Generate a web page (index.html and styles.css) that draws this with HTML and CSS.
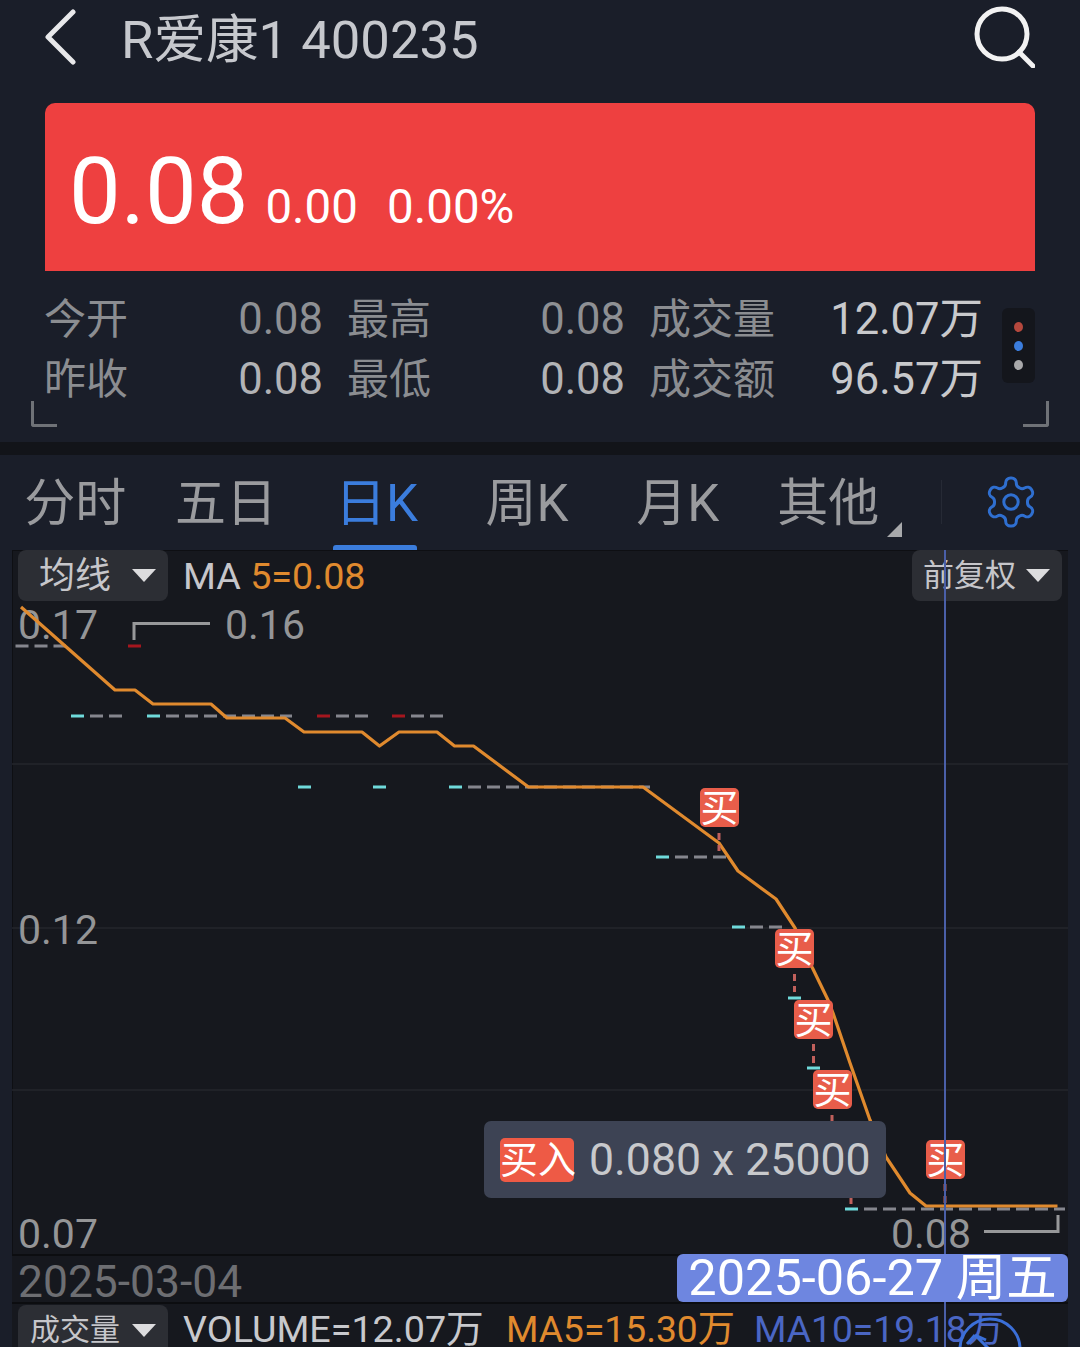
FILE: index.html
```html
<!DOCTYPE html>
<html lang="zh-CN">
<head>
  <meta charset="UTF-8">
  <meta name="viewport" content="width=device-width, initial-scale=1.0">
  <title>R爱康1 400235</title>
  <link rel="stylesheet" href="styles.css">
</head>
<body>
  <header class="topbar">
    <svg class="back-icon" viewBox="0 0 32 56"><path d="M28 3 L3 28 L28 53"/></svg>
    <h1 class="stock-name">R爱康1 400235</h1>
    <svg class="search-icon" viewBox="0 0 62 62"><circle cx="29" cy="28" r="25"/><path d="M46 46 L60 60"/></svg>
  </header>

  <section class="quote-card">
    <span class="price">0.08</span>
    <span class="change">0.00</span>
    <span class="change">0.00%</span>
  </section>

  <section class="stats">
    <div class="stats-grid">
      <div class="stat"><span>今开</span><b>0.08</b></div>
      <div class="stat"><span>最高</span><b>0.08</b></div>
      <div class="stat"><span>成交量</span><b class="bright">12.07万</b></div>
      <div class="stat"><span>昨收</span><b class="mid">0.08</b></div>
      <div class="stat"><span>最低</span><b class="mid">0.08</b></div>
      <div class="stat"><span>成交额</span><b class="bright">96.57万</b></div>
    </div>
    <div class="dots"><i class="dot-red"></i><i class="dot-blue"></i><i class="dot-gray"></i></div>
    <i class="corner corner-left"></i>
    <i class="corner corner-right"></i>
  </section>

  <div class="band"></div>

  <nav class="tabs">
    <a class="tab">分时</a>
    <a class="tab">五日</a>
    <a class="tab active">日K</a>
    <a class="tab">周K</a>
    <a class="tab">月K</a>
    <a class="tab more">其他</a>
    <i class="tab-sep"></i>
    <svg class="gear" viewBox="2 2 20 20">
      <path d="M12.22 2h-.44a2 2 0 0 0-2 2v.18a2 2 0 0 1-1 1.73l-.43.25a2 2 0 0 1-2 0l-.15-.08a2 2 0 0 0-2.73.73l-.22.38a2 2 0 0 0 .73 2.73l.15.1a2 2 0 0 1 1 1.72v.51a2 2 0 0 1-1 1.74l-.15.09a2 2 0 0 0-.73 2.73l.22.38a2 2 0 0 0 2.73.73l.15-.08a2 2 0 0 1 2 0l.43.25a2 2 0 0 1 1 1.73V20a2 2 0 0 0 2 2h.44a2 2 0 0 0 2-2v-.18a2 2 0 0 1 1-1.73l.43-.25a2 2 0 0 1 2 0l.15.08a2 2 0 0 0 2.73-.73l.22-.39a2 2 0 0 0-.73-2.73l-.15-.08a2 2 0 0 1-1-1.74v-.5a2 2 0 0 1 1-1.74l.15-.09a2 2 0 0 0 .73-2.73l-.22-.38a2 2 0 0 0-2.73-.73l-.15.08a2 2 0 0 1-2 0l-.43-.25a2 2 0 0 1-1-1.73V4a2 2 0 0 0-2-2z"/>
      <circle cx="12" cy="12" r="3"/>
    </svg>
  </nav>

  <main class="chart-wrap">
    <div class="chart">
      <!-- viewBox uses page coordinates so points can be read off the screen -->
      <svg class="plot" viewBox="12 550 1056 704">
        <defs>
          <g id="buy">
            <rect width="39" height="39" rx="5" class="buy-bg"/>
            <text x="19.5" y="33" class="buy-text">买</text>
          </g>
        </defs>

        <line class="grid" x1="12" y1="764" x2="1068" y2="764"/>
        <line class="grid" x1="12" y1="928" x2="1068" y2="928"/>
        <line class="grid" x1="12" y1="1090" x2="1068" y2="1090"/>

        <text class="axis" x="18" y="639">0.17</text>
        <text class="axis" x="225" y="639">0.16</text>
        <text class="axis" x="18" y="944">0.12</text>
        <text class="axis" x="18" y="1248">0.07</text>
        <text class="axis" x="891" y="1248">0.08</text>
        <path class="leader" d="M134 640 V623.5 H210"/>
        <path class="leader" d="M984 1231.5 H1058 V1215"/>

        <line class="dash" x1="15.5" y1="646" x2="66" y2="646"/>
        <line class="dash" x1="90" y1="716" x2="122" y2="716"/>
        <line class="dash" x1="166" y1="716" x2="292" y2="716"/>
        <line class="dash" x1="336" y1="716" x2="368" y2="716"/>
        <line class="dash" x1="411" y1="716" x2="443" y2="716"/>
        <line class="dash" x1="468" y1="787" x2="650" y2="787"/>
        <line class="dash" x1="675" y1="857" x2="728" y2="857"/>
        <line class="dash" x1="750" y1="927" x2="782" y2="927"/>
        <line class="dash" x1="864" y1="1209" x2="1065" y2="1209"/>

        <line class="tick-red" x1="128" y1="646" x2="141" y2="646"/>
        <line class="tick-red" x1="317" y1="716" x2="330" y2="716"/>
        <line class="tick-red" x1="392" y1="716" x2="405" y2="716"/>
        <line class="tick-cyan" x1="71" y1="716" x2="84" y2="716"/>
        <line class="tick-cyan" x1="147" y1="716" x2="160" y2="716"/>
        <line class="tick-cyan" x1="298" y1="787" x2="311" y2="787"/>
        <line class="tick-cyan" x1="373" y1="787" x2="386" y2="787"/>
        <line class="tick-cyan" x1="449" y1="787" x2="462" y2="787"/>
        <line class="tick-cyan" x1="656" y1="857" x2="669" y2="857"/>
        <line class="tick-cyan" x1="732" y1="927" x2="745" y2="927"/>
        <line class="tick-cyan" x1="788" y1="998" x2="801" y2="998"/>
        <line class="tick-cyan" x1="807" y1="1068" x2="820" y2="1068"/>
        <line class="tick-cyan" x1="845" y1="1209" x2="858" y2="1209"/>

        <polyline class="ma5" points="21,607 115,690 135,690 153,704 211,704 227,718 285,718 304,732 362,732 379.5,746 399,732 437,732 454.5,746 473.5,746 528.5,787 643,787 719,843 738,871 776,899 795,928 812,967 828,1000 833,1013 850,1063 870,1120 886,1157 910,1193 926,1206 1057.5,1206"/>

        <line class="buy-stem" x1="719" y1="833" x2="719" y2="851"/>
        <line class="buy-stem" x1="794.5" y1="974" x2="794.5" y2="992"/>
        <line class="buy-stem" x1="813.5" y1="1044" x2="813.5" y2="1063"/>
        <line class="buy-stem" x1="832" y1="1115" x2="832" y2="1124"/>
        <line class="buy-stem" x1="851" y1="1197" x2="851" y2="1204"/>
        <line class="buy-stem" x1="945" y1="1184" x2="945" y2="1208"/>

        <use href="#buy" x="700" y="788"/>
        <use href="#buy" x="775" y="929"/>
        <use href="#buy" x="794" y="1000"/>
        <use href="#buy" x="813" y="1070"/>
        <use href="#buy" x="926" y="1140"/>
      </svg>

      <div class="chart-head">
        <div class="pill">均线<i class="caret"></i></div>
        <div class="ma-label">MA <span class="c-orange">5=0.08</span></div>
        <div class="pill pill-right">前复权<i class="caret"></i></div>
      </div>

      <div class="trade-tip">
        <span class="trade-tag">买入</span>
        <span class="trade-text">0.080 x 25000</span>
      </div>
    </div>

    <div class="date-strip">
      <span class="date-start">2025-03-04</span>
      <span class="date-current">2025-06-27 周五</span>
    </div>

    <div class="volume-row">
      <div class="pill pill-volume">成交量<i class="caret"></i></div>
      <span class="vol vol-main">VOLUME=12.07万</span>
      <span class="vol vol-ma5 c-orange">MA5=15.30万</span>
      <span class="vol vol-ma10 c-blue">MA10=19.18万</span>
    </div>

    <i class="cursor"></i>
    <svg class="float-btn" viewBox="0 0 64 64"><circle cx="32" cy="32" r="30"/><path d="M17 18 L9 27 M17 18 L28 23 M17 18 L31 32"/></svg>
  </main>
</body>
</html>
```

FILE: styles.css
```css
:root {
  --page-bg: #1a1e29;
  --chart-bg: #16181e;
  --label: #8b8d91;
  --text: #c8c9cd;
  --blue: #3b7ddd;
  --orange: #e08a2e;
  --buy: #e85d4a;
}
* {
  box-sizing: border-box;
}
html, body {
  height: 1347px;
}
body {
  margin: 0;
  background: var(--page-bg);
  color: var(--text);
  font-family: "Roboto", "Noto Sans CJK SC", sans-serif;
  font-weight: 400;
  overflow: hidden;
}
i {
  display: block;
}

/* top bar */
.topbar {
  height: 103px;
  padding: 0 45px;
  display: flex;
  align-items: flex-start;
}
.back-icon {
  width: 32px;
  height: 56px;
  margin-top: 9px;
  fill: none;
  stroke: #e8e8ea;
  stroke-width: 5;
  stroke-linecap: round;
  stroke-linejoin: round;
}
.stock-name {
  margin: 7px 0 0 44px;
  font-size: 52.6px;
  line-height: 66px;
  font-weight: 400;
  color: #c6c8cd;
}
.search-icon {
  width: 62px;
  height: 62px;
  margin: 6px 0 0 auto;
  fill: none;
  stroke: #f2f2f2;
  stroke-width: 5;
  stroke-linecap: round;
}

/* price card */
.quote-card {
  height: 168px;
  margin: 0 45px;
  padding: 0 0 39px 24px;
  background: #ee4040;
  border-radius: 10px 10px 0 0;
  color: #fff;
  display: flex;
  align-items: flex-end;
  gap: 29px;
}
.price {
  font-size: 92px;
  line-height: 92px;
  margin-right: -12px;
  margin-bottom: -6px;
}
.change {
  font-size: 47.5px;
  line-height: 46px;
  margin-bottom: 2px;
}

/* stat rows */
.stats {
  height: 171px;
  position: relative;
  padding: 19px 0 0 46px;
}
.stats-grid {
  display: grid;
  grid-template-columns: 276px 275px 331px;
  grid-auto-rows: 60px;
  column-gap: 27px;
}
.stat {
  display: flex;
  justify-content: space-between;
  font-size: 42px;
  line-height: 60px;
  color: var(--label);
}
.stat span {
  margin-left: -2px;
}
.stat b {
  font-weight: 400;
  font-size: 43.5px;
  color: #8e9094;
  margin-right: -1px;
}
.stat b.mid {
  color: #b2b3b6;
}
.stat b.bright {
  color: #c8c9cc;
}
.dots {
  position: absolute;
  left: 1002px;
  top: 37px;
  width: 33px;
  height: 75px;
  background: #14161c;
  border-radius: 6px;
  display: flex;
  flex-direction: column;
  align-items: center;
  justify-content: center;
  gap: 9px;
}
.dots i {
  width: 9px;
  height: 10px;
  border-radius: 50%;
}
.dot-red { background: #b5483d; }
.dot-blue { background: var(--blue); }
.dot-gray { background: #a9a9ab; }
.corner {
  position: absolute;
  top: 130px;
  width: 26px;
  height: 26px;
  border-bottom: 3px solid #6f7277;
}
.corner-left {
  left: 31px;
  border-left: 3px solid #6f7277;
  border-bottom-left-radius: 3px;
}
.corner-right {
  left: 1023px;
  border-right: 3px solid #6f7277;
  border-bottom-right-radius: 3px;
}
.band {
  height: 13px;
  background: #121419;
}

/* period tabs */
.tabs {
  height: 95px;
  display: flex;
  align-items: flex-start;
}
.tab {
  width: 150.6px;
  height: 95px;
  text-align: center;
  font-size: 51px;
  line-height: 97px;
  color: #9a9b9e;
  position: relative;
  white-space: nowrap;
}
.tab.active {
  color: var(--blue);
}
.tab.active::after {
  content: "";
  position: absolute;
  left: 32px;
  right: 35px;
  bottom: 0;
  height: 5px;
  border-radius: 3px 3px 0 0;
  background: var(--blue);
}
.tab.more::after {
  content: "";
  position: absolute;
  left: 134px;
  top: 67px;
  border-style: solid;
  border-width: 0 0 15px 15px;
  border-color: transparent transparent #a8a9ab transparent;
}
.tab-sep {
  width: 1px;
  height: 44px;
  margin: 25px 0 0 37px;
  background: #262a35;
}
.gear {
  width: 48px;
  height: 48px;
  margin: 23px 0 0 45px;
  fill: none;
  stroke: #2f6fd0;
  stroke-width: 1.25;
  overflow: visible;
}

/* chart */
.chart-wrap {
  position: relative;
  margin: 0 12px;
  height: 797px;
}
.chart {
  position: relative;
  height: 704px;
  background: var(--chart-bg);
  box-shadow: inset 1px 1px 0 #0e0f13;
}
.plot {
  position: absolute;
  left: 0;
  top: 0;
  width: 1056px;
  height: 704px;
  display: block;
  overflow: visible;
}
.grid {
  stroke: #24262c;
  stroke-width: 1.5;
}
.axis {
  font-family: "Roboto", sans-serif;
  font-size: 41px;
  fill: #949597;
}
.leader {
  fill: none;
  stroke: #97989a;
  stroke-width: 3;
}
.dash {
  stroke: #85868e;
  stroke-width: 3;
  stroke-dasharray: 13 6;
}
.tick-red {
  stroke: #a5161e;
  stroke-width: 3;
}
.tick-cyan {
  stroke: #6fdadb;
  stroke-width: 3;
}
.ma5 {
  fill: none;
  stroke: #e08a2e;
  stroke-width: 3.2;
  stroke-linejoin: round;
}
.buy-stem {
  stroke: #c0605c;
  stroke-width: 3;
  stroke-dasharray: 7 5;
}
.buy-bg {
  fill: var(--buy);
}
.buy-text {
  font-family: "Noto Sans CJK SC", sans-serif;
  font-size: 38px;
  fill: #fff;
  text-anchor: middle;
}
.chart-head {
  position: relative;
  height: 51px;
  padding: 0 6px;
  display: flex;
  align-items: center;
  gap: 15px;
}
.pill {
  width: 150px;
  height: 51px;
  background: #2c2e34;
  border-radius: 8px;
  color: #c6c6ca;
  font-size: 36px;
  line-height: 50px;
  display: flex;
  align-items: center;
  justify-content: space-between;
  padding: 0 12px 0 21px;
}
.pill-right {
  margin-left: auto;
  font-size: 31px;
  padding: 0 12px 0 11px;
}
.caret {
  width: 0;
  height: 0;
  border-style: solid;
  border-width: 13px 12px 0 12px;
  border-color: #dcdcde transparent transparent transparent;
}
.ma-label {
  font-size: 37.7px;
  line-height: 50px;
  color: #c6c6ca;
}
.c-orange {
  color: var(--orange);
}
.c-blue {
  color: #4a66c4;
}
.trade-tip {
  position: absolute;
  left: 472px;
  top: 571px;
  width: 402px;
  height: 77px;
  background: #3d4354;
  border-radius: 7px;
  display: flex;
  align-items: center;
  padding-left: 16px;
  gap: 15px;
}
.trade-tag {
  width: 74px;
  height: 44px;
  background: #ee5a45;
  border-radius: 5px;
  color: #fff;
  font-size: 38px;
  line-height: 44px;
  text-align: center;
  white-space: nowrap;
}
.trade-text {
  font-size: 44.6px;
  color: #c8c9cc;
  white-space: nowrap;
}

/* date strip and volume header */
.date-strip {
  height: 50px;
  background: var(--chart-bg);
  border-top: 2px solid #0c0d10;
  border-bottom: 2px solid #0c0d10;
  display: flex;
  justify-content: space-between;
  padding-left: 6px;
  position: relative;
}
.date-start {
  font-size: 44.4px;
  line-height: 52px;
  color: #6d6e72;
}
.date-current {
  width: 391px;
  height: 48px;
  margin-top: -2px;
  background: #6e86e0;
  border-radius: 6px;
  color: #fff;
  font-size: 50.5px;
  line-height: 48px;
  text-align: center;
  white-space: nowrap;
  z-index: 2;
}
.volume-row {
  height: 43px;
  background: var(--chart-bg);
  padding: 1px 0 0 6px;
  display: flex;
  align-items: flex-start;
  overflow: hidden;
}
.pill-volume {
  flex: none;
  height: 60px;
  font-size: 30px;
  padding: 0 12px;
  align-items: flex-start;
  line-height: 50px;
}
.pill-volume .caret {
  margin-top: 19px;
}
.vol {
  font-size: 37.2px;
  line-height: 48px;
  white-space: nowrap;
}
.vol-main {
  margin-left: 15px;
  width: 323px;
  font-size: 37.7px;
}
.vol-ma5 {
  width: 248px;
}
.cursor {
  position: absolute;
  left: 932px;
  top: 0;
  bottom: 0;
  width: 2px;
  background: #4a5fa8;
  z-index: 1;
}
.float-btn {
  position: absolute;
  left: 946px;
  top: 767px;
  width: 64px;
  height: 64px;
  fill: none;
  stroke: #3b6fd8;
  stroke-width: 3;
  z-index: 1;
}
```
